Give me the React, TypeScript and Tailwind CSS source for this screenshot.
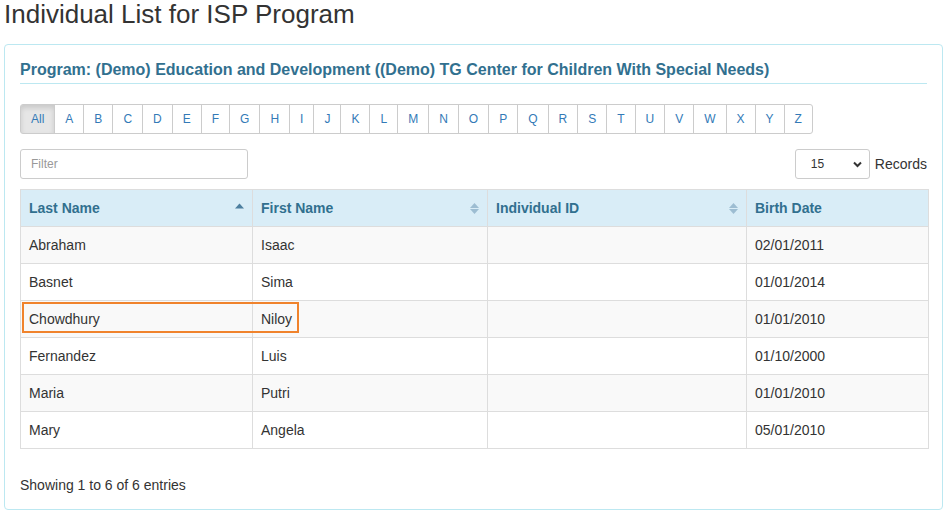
import React from 'react';

const letters = ['All', 'A', 'B', 'C', 'D', 'E', 'F', 'G', 'H', 'I', 'J', 'K', 'L', 'M', 'N', 'O', 'P', 'Q', 'R', 'S', 'T', 'U', 'V', 'W', 'X', 'Y', 'Z'];

const rows = [
  { last: 'Abraham', first: 'Isaac', id: '', dob: '02/01/2011' },
  { last: 'Basnet', first: 'Sima', id: '', dob: '01/01/2014' },
  { last: 'Chowdhury', first: 'Niloy', id: '', dob: '01/01/2010' },
  { last: 'Fernandez', first: 'Luis', id: '', dob: '01/10/2000' },
  { last: 'Maria', first: 'Putri', id: '', dob: '01/01/2010' },
  { last: 'Mary', first: 'Angela', id: '', dob: '05/01/2010' },
];

function SortAsc() {
  return (
    <svg width="9" height="11" viewBox="0 0 9 11" className="shrink-0">
      <path d="M4.5 0.5 L9 5.5 L0 5.5 Z" fill="#4d7f9f" />
    </svg>
  );
}

function SortBoth() {
  return (
    <svg width="9" height="11" viewBox="0 0 9 11" className="shrink-0">
      <path d="M4.5 0 L9 5 L0 5 Z" fill="#9dbdd2" />
      <path d="M0 6 L9 6 L4.5 11 Z" fill="#9dbdd2" />
    </svg>
  );
}

export default function App() {
  return (
    <div className="w-[948px] h-[516px] bg-white text-[#333] font-['Liberation_Sans',Arial,sans-serif] overflow-hidden">
      <h1 className="h-[28px] text-[26px] leading-[28px] pl-[4px] text-[#333] whitespace-nowrap">Individual List for ISP Program</h1>

      <div className="mt-[16px] mx-[4px] w-[939px] border border-[#bce8f1] rounded-[4px] px-[15px] pt-[15px] pb-[14px]">
        {/* Program heading */}
        <div className="border-b border-[#bce8f1] pb-[3px]">
          <h2 className="text-[16px] leading-[20px] font-bold text-[#31708f]">
            Program: (Demo) Education and Development ((Demo) TG Center for Children With Special Needs)
          </h2>
        </div>

        {/* Alphabet filter */}
        <div className="mt-[20px] flex">
          {letters.map((l, i) => (
            <button
              key={l}
              className={
                'h-[30px] px-[10px] text-[12px] leading-[18px] border border-[#ccc] ' +
                (i === 0
                  ? 'bg-[#e6e6e6] text-[#337ab7] rounded-l-[3px] shadow-[inset_0_3px_5px_rgba(0,0,0,0.125)] border-[#adadad]'
                  : 'bg-white text-[#337ab7] -ml-px') +
                (i === letters.length - 1 ? ' rounded-r-[3px]' : '')
              }
            >
              {l}
            </button>
          ))}
        </div>

        {/* Filter + records */}
        <div className="mt-[15px] flex items-center justify-between">
          <input
            placeholder="Filter"
            className="w-[228px] h-[30px] border border-[#ccc] rounded-[3px] px-[10px] text-[12px] placeholder-[#999] outline-none"
          />
          <div className="flex items-center gap-[5px]">
            <div className="w-[75px] h-[30px] border border-[#ccc] rounded-[3px] flex items-center justify-between pl-[15px] pr-[7px] text-[12px] text-[#333]">
              <span>15</span>
              <svg width="9" height="7" viewBox="0 0 9 7">
                <path d="M1 1.5 L4.5 5 L8 1.5" stroke="#333" strokeWidth="2" fill="none" />
              </svg>
            </div>
            <span className="text-[14px] leading-[20px] mt-[-1px]">Records</span>
          </div>
        </div>

        {/* Table */}
        <div className="relative mt-[10px]">
          <table className="w-[908px] table-fixed border-collapse text-[14px] leading-[20px]">
            <colgroup>
              <col className="w-[232px]" />
              <col className="w-[235px]" />
              <col className="w-[259px]" />
              <col className="w-[182px]" />
            </colgroup>
            <thead>
              <tr className="bg-[#d9edf7] text-[#31708f] font-bold text-left">
                <th className="border border-[#ddd] px-[8px] py-[8px]">
                  <div className="flex items-center justify-between">
                    <span>Last Name</span>
                    <SortAsc />
                  </div>
                </th>
                <th className="border border-[#ddd] px-[8px] py-[8px]">
                  <div className="flex items-center justify-between">
                    <span>First Name</span>
                    <SortBoth />
                  </div>
                </th>
                <th className="border border-[#ddd] px-[8px] py-[8px]">
                  <div className="flex items-center justify-between">
                    <span>Individual ID</span>
                    <SortBoth />
                  </div>
                </th>
                <th className="border border-[#ddd] px-[8px] py-[8px]">Birth Date</th>
              </tr>
            </thead>
            <tbody>
              {rows.map((r, i) => (
                <tr key={r.last} className={i % 2 === 0 ? 'bg-[#f9f9f9]' : 'bg-white'}>
                  <td className="border border-[#ddd] px-[8px] py-[8px]">{r.last}</td>
                  <td className="border border-[#ddd] px-[8px] py-[8px]">{r.first}</td>
                  <td className="border border-[#ddd] px-[8px] py-[8px]">{r.id}</td>
                  <td className="border border-[#ddd] px-[8px] py-[8px]">{r.dob}</td>
                </tr>
              ))}
            </tbody>
          </table>
          {/* highlight annotation */}
          <div className="absolute left-[2px] top-[113px] w-[277px] h-[31px] border-2 border-[#f0832c] pointer-events-none" />
        </div>

        <p className="mt-[26px] text-[14px] leading-[20px]">Showing 1 to 6 of 6 entries</p>
      </div>
    </div>
  );
}
